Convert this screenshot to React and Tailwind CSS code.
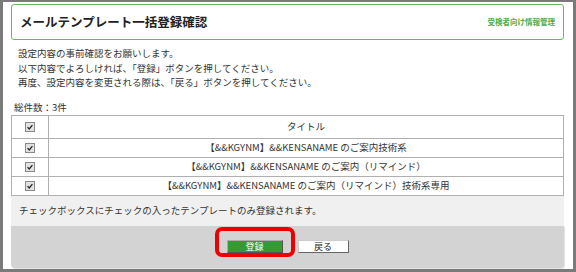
const rows = [
  '【&&KGYNM】&&KENSANAME のご案内技術系',
  '【&&KGYNM】&&KENSANAME のご案内（リマインド）',
  '【&&KGYNM】&&KENSANAME のご案内（リマインド）技術系専用',
]

function Check() {
  return (
    <span className="inline-flex h-[10px] w-[10px] items-center justify-center border border-[#8a8a8a] bg-[#e2e2e2]">
      <svg viewBox="0 0 10 10" className="h-[8px] w-[8px]">
        <path d="M2 5.2 L4 7.4 L8 2.6" fill="none" stroke="#222" strokeWidth="1.6" />
      </svg>
    </span>
  )
}

export default function App() {
  return (
    <div
      className="h-[272px] w-[576px] overflow-hidden border-b-[3px] border-l-[3px] border-r-[3px] border-t-[2px] border-[#7a7a7a] bg-white text-[#333]"
      style={{ fontFamily: '"Noto Sans CJK JP", "Liberation Sans", sans-serif' }}
    >
      <div className="relative pl-[8px] pr-[9px] pt-[2px]">
        {/* Header */}
        <div className="flex h-[36px] items-center justify-between rounded-[3px] border border-[#66bb5c] px-[8px]">
          <h1 className="text-[12.5px] font-bold text-[#222]">メールテンプレート一括登録確認</h1>
          <span className="text-[7.5px] font-bold text-[#55a84c]">受検者向け情報管理</span>
        </div>

        {/* Description */}
        <div className="mt-[6px] px-[7px] text-[9.5px] leading-[14.5px]">
          <p>設定内容の事前確認をお願いします。</p>
          <p>以下内容でよろしければ、「登録」ボタンを押してください。</p>
          <p>再度、設定内容を変更される際は、「戻る」ボタンを押してください。</p>
        </div>

        <p className="mt-[11px] pl-[3px] text-[9.5px] leading-[13px]">総件数：3件</p>

        {/* Table */}
        <table className="mt-[1px] w-full border-collapse bg-white text-[9.5px]">
          <thead>
            <tr className="h-[23px]">
              <th className="w-[37px] border border-[#b0b0b0] font-normal">
                <div className="flex justify-center"><Check /></div>
              </th>
              <th className="border border-[#b0b0b0] font-normal">タイトル</th>
            </tr>
          </thead>
          <tbody>
            {rows.map((r) => (
              <tr key={r} className="h-[19px]">
                <td className="border border-[#b0b0b0]">
                  <div className="flex justify-center"><Check /></div>
                </td>
                <td className="border border-[#b0b0b0] text-center">{r}</td>
              </tr>
            ))}
          </tbody>
        </table>

        {/* Note */}
        <div className="flex h-[30px] items-center bg-[#f0f0f0] px-[8px] text-[9.5px]">
          チェックボックスにチェックの入ったテンプレートのみ登録されます。
        </div>

        {/* Footer */}
        <div className="flex h-[42px] items-center justify-center gap-[15px] rounded-b-[4px] bg-[#d3d3d3] shadow-[1px_1px_1px_rgba(0,0,0,0.12)]">
          <button className="flex h-[13px] w-[56px] items-center justify-center border border-b-[#555] border-l-[#aaa] border-r-[#555] border-t-[#aaa] bg-[#349a34] text-[9px] text-white">
            登録
          </button>
          <button className="flex h-[13px] w-[51px] items-center justify-center border border-b-[#666] border-l-[#ccc] border-r-[#666] border-t-[#ccc] bg-white text-[9px] text-[#222]">
            戻る
          </button>
        </div>

        {/* Highlight annotation */}
        <div className="pointer-events-none absolute left-[212px] top-[225px] h-[30px] w-[80px] rounded-[7px] border-[4px] border-[#ee0000]" />
      </div>
    </div>
  )
}
